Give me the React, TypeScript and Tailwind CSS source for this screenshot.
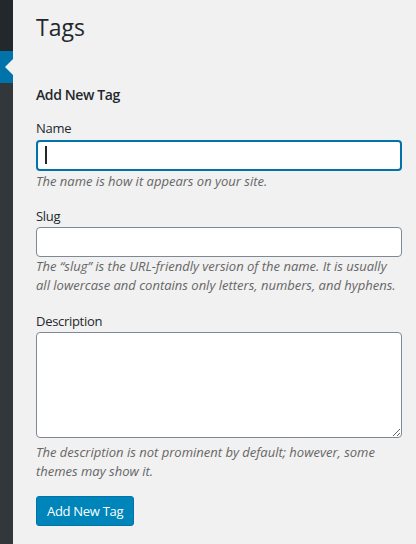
import React from 'react';

const font = { fontFamily: '"Open Sans", "Noto Sans", sans-serif' };

export default function App() {
  return (
    <div className="flex w-[416px] h-[544px] overflow-hidden bg-[#f1f1f1] text-[#23282d]" style={font}>
      {/* admin sidebar edge */}
      <div className="w-[13px] shrink-0 flex flex-col">
        <div className="h-[51px] bg-[#23282d]" />
        <div className="relative h-[32px] bg-[#0073aa]">
          <span className="absolute right-0 top-[8px] w-0 h-0 border-y-[8px] border-y-transparent border-r-[8px] border-r-[#f1f1f1]" />
        </div>
        <div className="flex-1 bg-[#32373c]" />
      </div>

      <div className="flex-1 pl-[23px] pr-[14px]">
        <h1 className="text-[23px] leading-[30px] font-normal mt-[12px]">Tags</h1>

        <h2 className="text-[14px] leading-5 font-semibold tracking-[-0.4px] mt-[43px]">Add New Tag</h2>

        <div className="mt-[13px]">
          <label className="block text-[13px] leading-5 tracking-[-0.3px]">Name</label>
          <div className="relative mt-[2px]">
            <input
              type="text"
              className="block w-full h-[31px] rounded-[4px] bg-white border-2 border-[#0073aa] outline-none"
            />
            <span className="absolute left-[9px] top-[6px] w-[1.5px] h-[18px] bg-[#23282d]" />
          </div>
          <p className="mt-0 text-[13px] leading-5 italic text-[#666]">
            The name is how it appears on your site.
          </p>
        </div>

        <div className="mt-[15px]">
          <label className="block text-[13px] leading-5 tracking-[-0.3px]">Slug</label>
          <input
            type="text"
            className="block w-full h-[30px] mt-[1px] rounded-[4px] bg-white border border-[#7e8993] outline-none"
          />
          <p className="mt-0 text-[13px] leading-[19px] italic text-[#666]">
            The “slug” is the URL-friendly version of the name. It is usually all lowercase and contains only letters, numbers, and hyphens.
          </p>
        </div>

        <div className="mt-[16px]">
          <label className="block text-[13px] leading-5 tracking-[-0.3px]">Description</label>
          <textarea className="block w-full h-[106px] mt-[1px] rounded-[4px] bg-white border border-[#7e8993] outline-none" />
          <p className="mt-[5px] text-[13px] leading-[19px] italic text-[#666]">
            The description is not prominent by default; however, some themes may show it.
          </p>
        </div>

        <button className="mt-[15px] h-[30px] px-[10px] rounded-[3px] bg-[#0085ba] border border-[#0073aa] text-white text-[13px] tracking-[-0.3px] leading-[28px]">
          Add New Tag
        </button>
      </div>
    </div>
  );
}
